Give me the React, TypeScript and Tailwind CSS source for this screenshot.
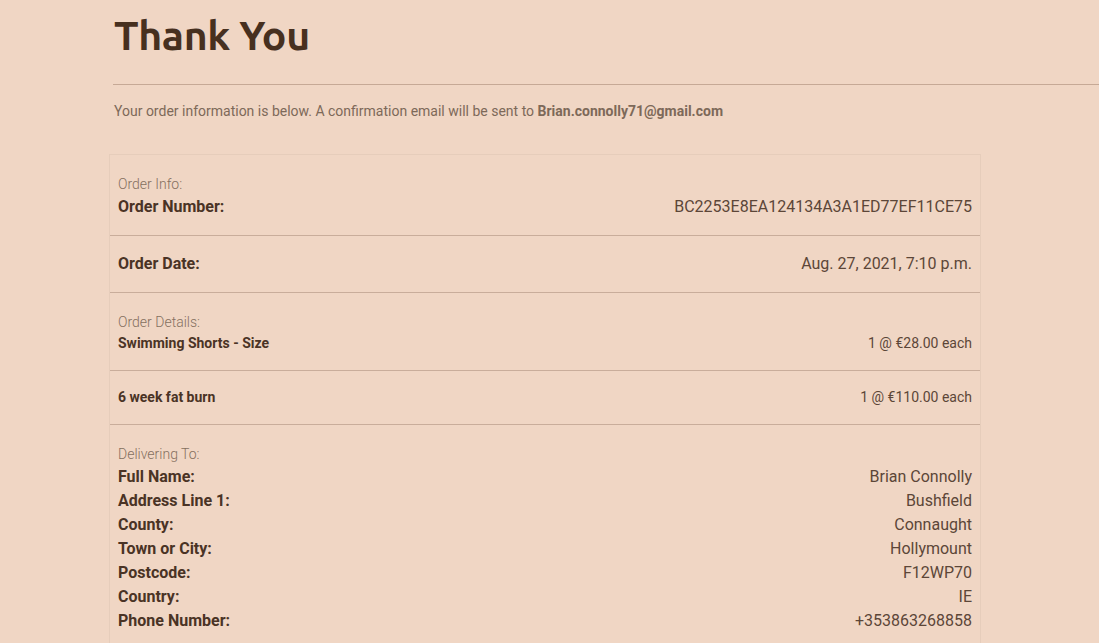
import React from "react";

const address = [
  ["Full Name:", "Brian Connolly"],
  ["Address Line 1:", "Bushfield"],
  ["County:", "Connaught"],
  ["Town or City:", "Hollymount"],
  ["Postcode:", "F12WP70"],
  ["Country:", "IE"],
  ["Phone Number:", "+353863268858"],
];

function Label({ text }: { text: string }) {
  return <p className="pt-[2px] text-[14px] leading-[22px] font-light text-[#85705f]">{text}</p>;
}

export default function App() {
  return (
    <div className="min-h-[643px] bg-[#f0d6c4] font-['Roboto',sans-serif] overflow-hidden">
      <div className="pl-[113px]">
        <h1 className="pt-[8px] pl-[1px] text-[41px] leading-[54px] font-bold text-[#47301f] font-['Ubuntu','Open_Sans',sans-serif] tracking-[-0.4px]">
          Thank You
        </h1>
        <hr className="mt-[22px] border-0 border-t border-[#c6a996]" />
        <p className="mt-[16px] pl-[1px] text-[14px] leading-5 text-[#7d6959]">
          Your order information is below. A confirmation email will be sent to{" "}
          <strong className="font-bold">Brian.connolly71@gmail.com</strong>
        </p>
      </div>

      <div className="mt-[33px] ml-[109px] w-[872px] border border-b-0 border-[#e6cdbb]">
        <div className="px-2 py-4 border-b border-[#c9ad9b]">
          <Label text="Order Info:" />
          <div className="flex justify-between text-[16px] leading-6">
            <span className="font-bold text-[#4a3325]">Order Number:</span>
            <span className="text-[#5c4638]">BC2253E8EA124134A3A1ED77EF11CE75</span>
          </div>
        </div>
        <div className="px-2 py-4 border-b border-[#c9ad9b]">
          <div className="flex justify-between text-[16px] leading-6">
            <span className="font-bold text-[#4a3325]">Order Date:</span>
            <span className="text-[#5c4638]">Aug. 27, 2021, 7:10 p.m.</span>
          </div>
        </div>
        <div className="px-2 py-4 border-b border-[#c9ad9b]">
          <Label text="Order Details:" />
          <div className="flex justify-between text-[14px] leading-[21px]">
            <span className="font-bold text-[#4a3325]">Swimming Shorts - Size</span>
            <span className="text-[#5c4638]">1 @ €28.00 each</span>
          </div>
        </div>
        <div className="px-2 py-4 border-b border-[#c9ad9b]">
          <div className="flex justify-between text-[14px] leading-[21px]">
            <span className="font-bold text-[#4a3325]">6 week fat burn</span>
            <span className="text-[#5c4638]">1 @ €110.00 each</span>
          </div>
        </div>
        <div className="px-2 py-4">
          <Label text="Delivering To:" />
          {address.map(([k, v]) => (
            <div key={k} className="flex justify-between text-[16px] leading-6">
              <span className="font-bold text-[#4a3325]">{k}</span>
              <span className="text-[#5c4638]">{v}</span>
            </div>
          ))}
        </div>
      </div>
    </div>
  );
}
